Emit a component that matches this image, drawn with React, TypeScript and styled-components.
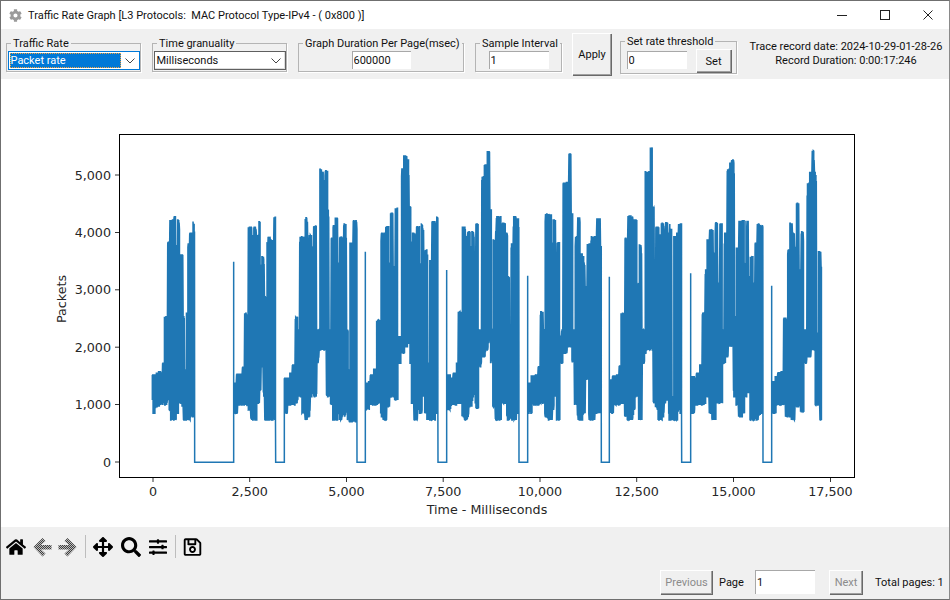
import React from 'react';
import styled, { createGlobalStyle } from 'styled-components';
import { FaHome, FaArrowsAlt, FaSearch, FaSlidersH, FaRegSave, FaCog } from 'react-icons/fa';

const UI = '"Roboto", "Liberation Sans", sans-serif';
const Global = createGlobalStyle`
  html, body { margin: 0; padding: 0; background: #fff; }
  body { font-family: ${UI}; font-size: 11px; color: #000; }
`;

const Window = styled.div`
  width: 950px; height: 600px; box-sizing: border-box; border: 1px solid #6f6f6f;
  border-right-color: #8a8a8a; display: flex; flex-direction: column; overflow: hidden; background: #fff;
`;
const TitleBar = styled.div`
  height: 28px; flex: none; display: flex; align-items: center; padding-left: 8px; background: #fff;
`;
const AppIcon = styled(FaCog)`
  width: 13px; height: 13px; color: #9a9a9a; margin-right: 6px;
`;
const Title = styled.div` flex: 1; font-size: 11px; white-space: pre; color: #111; `;
const WinButton = styled.div`
  width: 43px; height: 28px; display: flex; align-items: center; justify-content: center;
  svg { width: 12px; height: 12px; stroke: #222; stroke-width: 1; fill: none; }
`;
const Toolbar = styled.div`
  height: 50px; flex: none; background: #f0f0f0; display: flex; align-items: center; gap: 11px; padding-left: 5px;
`;
const Group = styled.fieldset<{ $w: number; $h?: number }>`
  width: ${p => p.$w}px; height: ${p => p.$h ?? 36}px; box-sizing: border-box; margin: 0; padding: 0;
  border: 1px solid #b4b4b4; box-shadow: 1px 1px 0 #fff; display: flex; justify-content: center; flex: none; min-width: 0;
`;
const Legend = styled.legend`
  margin-left: 4px; padding: 0 2px; font-size: 11px; line-height: 15px; white-space: nowrap; color: #111;
`;
const GroupInner = styled.div<{ $pad?: string }>`
  display: flex; align-items: flex-start; width: 100%; justify-content: center; padding: ${p => p.$pad ?? '0'};
  box-sizing: border-box;
`;
const Select = styled.div<{ $active?: boolean }>`
  width: 132px; height: 19px; box-sizing: border-box; display: flex; align-items: center; background: #fff;
  border: 1px solid ${p => (p.$active ? '#0078d7' : '#5f5f5f')};
  box-shadow: ${p => (p.$active ? 'none' : 'inset -1px -1px 0 #ddd')};
`;
const SelectValue = styled.div<{ $active?: boolean }>`
  flex: 1; height: 15px; line-height: 14px; padding-left: 0; margin-left: 1px; box-sizing: border-box; font-size: 11px;
  background: ${p => (p.$active ? '#0078d7' : 'transparent')}; color: ${p => (p.$active ? '#fff' : '#111')};
  border: 1px dotted ${p => (p.$active ? '#f2a23c' : 'transparent')};
`;
const Chevron = styled.svg`
  width: 10px; height: 6px; margin: 0 4px 0 4px; flex: none; fill: none; stroke: #444; stroke-width: 1;
`;
const Field = styled.input<{ $w: number; $h?: number }>`
  width: ${p => p.$w}px; height: ${p => p.$h ?? 18}px; box-sizing: border-box; margin: 0; padding: 0 0 0 1px;
  border: none; border-top: 1px solid #a8a8a8; border-left: 1px solid #a8a8a8; outline: none; background: #fff;
  font: 11px ${UI}; color: #111; flex: none;
`;
const Btn = styled.button<{ $w: number; $h: number; $off?: boolean }>`
  width: ${p => p.$w}px; height: ${p => p.$h}px; box-sizing: border-box; flex: none; margin: 0; padding: 0;
  background: #f0f0f0; border: none; border-top: 1px solid #fff; border-left: 1px solid #fff;
  box-shadow: inset -1px -1px 0 #a0a0a0, 1px 1px 0 #696969;
  font: 11px ${UI}; color: ${p => (p.$off ? '#8b8b8b' : '#111')};
`;
const ApplyBtn = styled(Btn)` margin: 0 -2px 0 -1px; `;
const SetBtn = styled(Btn)` margin: -2px 0 0 9px; `;
const Info = styled.div`
  width: 196px; text-align: center; font-size: 11px; line-height: 14px; white-space: nowrap; color: #111;
`;
const Content = styled.div` flex: 1; min-height: 0; background: #fff; `;
const ChartSvg = styled.svg`
  display: block; width: 948px; height: 448px;
  text { font-family: "DejaVu Sans", sans-serif; font-size: 12.7px; fill: #262626; }
`;
const Bottom = styled.div`
  height: 72px; flex: none; background: #f0f0f0; display: flex; flex-direction: column;
`;
const NavBar = styled.div`
  height: 43px; flex: none; display: flex; align-items: flex-start; padding: 10px 0 0 5px; box-sizing: border-box;
`;
const Tool = styled.div<{ $w: number; $gap?: number }>`
  width: ${p => p.$w}px; height: 20px; flex: none; display: flex; align-items: center; justify-content: center;
  margin-right: ${p => p.$gap ?? 8}px; color: #000; svg { width: 100%; height: 100%; }
`;
const Sep = styled.div`
  width: 1px; height: 23px; margin: -2px 7px 0 0; background: #bdbdbd; flex: none;
`;
const Pager = styled.div`
  display: flex; align-items: center; height: 24px; padding-left: 659px; font-size: 11px; color: #111;
`;
const PageLabel = styled.span` width: 24px; flex: none; margin: 0 12px 0 7px; white-space: nowrap; `;
const TotalLabel = styled.span` margin-left: 13px; white-space: nowrap; `;
const NextBtn = styled(Btn)` margin-left: 14px; `;

type C = [number, number, number];
const O5 = 110, O6 = 350, O7 = 600;
const BURSTS: { o: number; start?: number; end: number; spike: number; cols: C[] }[] = [
  { o: O5, end: 254, spike: 395, cols: [[127,735,810],[131,735,850],[135,770,825],[140,730,830],[146,725,825],[152,745,825],[158,700,820],[164,560,825],[170,600,810],[174,335,790],[180,270,840],[184,270,870],[191,258,870],[196,345,850],[203,270,810],[208,460,820],[212,375,710],[218,560,830],[222,720,870],[230,550,870],[234,340,870],[240,310,860],[250,265,850]] },
  { o: O5, start: 371, end: 497, spike: 745, cols: [[371,760,850],[380,733,825],[390,733,825],[398,712,825],[405,550,825],[410,620,820],[416,292,840],[425,315,870],[432,290,870],[438,315,820],[446,275,780],[450,380,710],[458,380,710],[462,500,800],[466,800,870],[472,320,870],[480,330,870],[492,262,870]] },
  { o: O5, start: 523, end: 741, spike: 365, cols: [[523,745,850],[530,745,825],[540,730,825],[548,705,825],[556,560,820],[562,600,800],[570,320,800],[578,320,850],[586,263,870],[592,350,860],[598,315,800],[605,370,700],[612,288,800],[618,600,700],[624,600,660],[630,118,660],[636,125,660],[640,150,660],[646,122,660],[652,240,800],[656,600,700],[664,325,825],[670,285,870],[676,265,870],[682,400,820],[690,322,870],[696,480,710],[702,282,860],[708,600,720],[714,720,870],[720,340,875],[730,272,875],[738,275,860]] },
  { o: O6, start: 46, end: 264, spike: 420, cols: [[48,760,840],[56,755,825],[62,735,825],[72,718,825],[80,570,820],[88,600,800],[94,310,860],[102,315,870],[108,290,830],[116,400,800],[122,250,800],[128,410,700],[136,235,810],[142,620,700],[150,620,670],[155,115,670],[162,78,650],[170,90,640],[176,230,640],[182,600,700],[186,310,820],[194,315,870],[200,290,840],[208,400,850],[214,285,800],[220,440,710],[226,360,850],[232,700,870],[240,390,870],[246,275,870],[254,330,850],[260,262,850]] },
  { o: O6, start: 290, end: 507, spike: 437, cols: [[292,735,840],[300,745,825],[310,730,825],[320,700,820],[326,545,820],[332,600,800],[338,292,860],[346,320,870],[354,305,820],[360,350,830],[366,305,800],[372,440,720],[378,282,835],[384,600,710],[392,600,680],[396,140,680],[404,105,660],[412,65,640],[418,240,640],[424,600,700],[430,330,830],[438,260,870],[445,260,870],[452,400,800],[458,280,820],[465,310,700],[472,440,870],[478,820,870],[484,340,870],[490,260,870],[497,300,850],[503,265,850]] },
  { o: O6, start: 533, end: 754, spike: 440, cols: [[536,760,850],[544,738,825],[556,735,825],[565,710,820],[572,545,820],[578,600,790],[586,252,860],[596,255,870],[604,340,840],[610,270,800],[616,430,700],[622,338,870],[628,620,700],[636,600,670],[640,160,670],[650,155,650],[657,72,650],[662,250,640],[668,600,700],[676,320,825],[684,262,870],[690,370,870],[696,380,850],[704,470,750],[712,342,710],[718,800,870],[724,320,870],[732,320,850],[740,265,850],[750,350,850]] },
  { o: O7, start: 28, end: 245, spike: 430, cols: [[29,750,850],[38,738,825],[50,735,825],[58,708,820],[64,550,820],[70,600,790],[76,325,860],[84,258,870],[92,262,870],[98,345,840],[103,270,800],[110,460,700],[118,345,870],[124,600,700],[132,600,670],[136,125,660],[144,125,660],[151,55,660],[156,230,660],[162,550,820],[168,292,840],[176,315,870],[184,280,860],[190,400,820],[195,278,810],[202,460,710],[208,282,870],[214,800,870],[222,320,870],[230,310,850],[236,282,850]] },
  { o: O7, start: 272, end: 489, spike: 467, cols: [[274,740,850],[282,745,825],[290,730,825],[300,705,825],[308,550,820],[316,420,800],[322,330,800],[330,300,850],[338,370,870],[346,278,820],[352,460,720],[360,282,820],[366,600,700],[374,310,680],[382,118,650],[390,100,650],[396,90,650],[402,560,800],[410,355,825],[418,272,860],[426,272,850],[432,400,800],[438,272,790],[444,440,710],[452,380,870],[458,460,870],[466,340,870],[472,282,855],[480,285,850]] },
  { o: O7, start: 515, end: 665, spike: 0, cols: [[518,755,850],[526,740,825],[534,728,825],[544,725,825],[552,565,820],[558,620,860],[564,360,860],[570,280,860],[576,310,870],[582,350,830],[590,220,830],[596,420,720],[604,305,845],[610,600,700],[618,600,680],[622,160,680],[630,125,660],[637,62,660],[642,125,660],[648,610,825],[656,365,820],[662,410,870]] },
];

const sy = (z: number) => 130 + z / 3;
const ZERO = 462.3;
let seed = 12345;
const rnd = () => {
  seed = (seed * 1664525 + 1013904223) % 4294967296;
  return seed / 4294967296;
};

function burstPath(o: number, cols: C[], end: number): string {
  const at = (z: number): C => {
    let c = cols[0];
    for (const k of cols) if (k[0] <= z) c = k;
    return c;
  };
  let d = '';
  let flip = false;
  for (let z = cols[0][0]; z <= end; z += 1.1) {
    const b = at(z);
    const wide = [at(z - 2.5), b, at(z + 2.5)];
    const topBase = Math.min(b[1], at(z - 1)[1], at(z + 1)[1]);
    const botBase = Math.max(...wide.map((c) => c[2]));
    // the trace is a rapid oscillation: many samples stop short of the envelope
    const r1 = rnd();
    const r2 = rnd();
    const topZ = topBase + (r1 < 0.6 ? 0 : (r1 - 0.6) * Math.min(120, Math.max(0, 640 - topBase) * 0.3));
    const botZ = botBase - (r2 < 0.55 ? 0 : (r2 - 0.55) * 45);
    const x = (o + z / 3).toFixed(2);
    const top = sy(topZ).toFixed(1);
    const bot = sy(botZ).toFixed(1);
    d += flip ? `L${x} ${bot}L${x} ${top}` : `L${x} ${top}L${x} ${bot}`;
    flip = !flip;
  }
  return d;
}

function buildPath(): string {
  let d = 'M152.5 400';
  let spike = 0;
  BURSTS.forEach((s) => {
    if (s.start !== undefined) {
      const x = (s.o + s.start / 3).toFixed(2);
      d += `L${x} ${ZERO}L${x} ${sy(spike).toFixed(1)}L${x} 395`;
    }
    d += burstPath(s.o, s.cols, s.end);
    if (s.spike) d += `L${(s.o + s.end / 3).toFixed(2)} ${ZERO}`;
    spike = s.spike;
  });
  return d;
}

const LINE = buildPath();
const XT: [number, string][] = [[153,'0'],[249.7,'2,500'],[346.5,'5,000'],[443.2,'7,500'],[540,'10,000'],[636.7,'12,500'],[733.5,'15,000'],[830.5,'17,500']];
const YT: [number, string][] = [[462,'0'],[404.5,'1,000'],[347.2,'2,000'],[289.8,'3,000'],[232.5,'4,000'],[175,'5,000']];

function Chart() {
  return (
    <ChartSvg viewBox="1 79 948 448">
      <path d={LINE} fill="none" stroke="#1f77b4" strokeWidth={1.5} strokeLinejoin="miter" />
      <rect x={119.5} y={134.5} width={735} height={343} fill="none" stroke="#000" strokeWidth={1} />
      {XT.map(([x, l]) => (
        <g key={l}>
          <line x1={x} x2={x} y1={478} y2={482} stroke="#000" strokeWidth={0.8} />
          <text x={x} y={496} textAnchor="middle">{l}</text>
        </g>
      ))}
      {YT.map(([y, l]) => (
        <g key={l}>
          <line x1={115} x2={119} y1={y} y2={y} stroke="#000" strokeWidth={0.8} />
          <text x={111} y={y + 4.6} textAnchor="end">{l}</text>
        </g>
      ))}
      <text x={487} y={514} textAnchor="middle">Time - Milliseconds</text>
      <text transform="translate(66 299) rotate(-90)" textAnchor="middle">Packets</text>
    </ChartSvg>
  );
}

const Down = () => (
  <Chevron viewBox="0 0 10 6"><path d="M0.5 0.5 L5 5 L9.5 0.5" /></Chevron>
);

const Dither = ({ id }: { id: string }) => (
  <defs>
    <pattern id={id} patternUnits="userSpaceOnUse" width="2" height="2">
      <rect width="2" height="2" fill="#bcbcbc" />
      <rect width="1" height="1" fill="#3e3e3e" />
      <rect x="1" y="1" width="1" height="1" fill="#3e3e3e" />
    </pattern>
  </defs>
);

const BackIcon = () => (
  <svg viewBox="0 0 19 20">
    <Dither id="d-back" />
    <path fill="url(#d-back)" d="M0.5 10 L9.5 1 L12.5 4 L8 8 H18.5 V12.5 H8 L12.5 16.5 L9.5 19.5 Z" />
  </svg>
);
const ForwardIcon = () => (
  <svg viewBox="0 0 19 20">
    <Dither id="d-forward" />
    <path fill="url(#d-forward)" d="M18.5 10 L9.5 1 L6.5 4 L11 8 H0.5 V12.5 H11 L6.5 16.5 L9.5 19.5 Z" />
  </svg>
);

export default function App() {
  return (
    <Window>
      <Global />
      <TitleBar>
        <AppIcon />
        <Title>{'Traffic Rate Graph [L3 Protocols:  MAC Protocol Type-IPv4 - ( 0x800 )]'}</Title>
        <WinButton><svg viewBox="0 0 12 12"><path d="M1 6.5 H11" /></svg></WinButton>
        <WinButton><svg viewBox="0 0 12 12"><rect x="1.5" y="1.5" width="9" height="9" /></svg></WinButton>
        <WinButton><svg viewBox="0 0 12 12"><path d="M1.5 1.5 L10.5 10.5 M10.5 1.5 L1.5 10.5" /></svg></WinButton>
      </TitleBar>
      <Toolbar>
        <Group $w={135}>
          <Legend>Traffic Rate</Legend>
          <GroupInner>
            <Select $active><SelectValue $active>Packet rate</SelectValue><Down /></Select>
          </GroupInner>
        </Group>
        <Group $w={135}>
          <Legend>Time granuality</Legend>
          <GroupInner>
            <Select><SelectValue>Milliseconds</SelectValue><Down /></Select>
          </GroupInner>
        </Group>
        <Group $w={166}>
          <Legend>Graph Duration Per Page(msec)</Legend>
          <GroupInner><Field $w={59} readOnly value="600000" /></GroupInner>
        </Group>
        <Group $w={87}>
          <Legend>Sample Interval</Legend>
          <GroupInner><Field $w={60} readOnly value="1" /></GroupInner>
        </Group>
        <ApplyBtn $w={39} $h={42}>Apply</ApplyBtn>
        <Group $w={117} $h={40}>
          <Legend>Set rate threshold</Legend>
          <GroupInner $pad="2px 0 0 0">
            <Field $w={60} readOnly value="0" />
            <SetBtn $w={35} $h={23}>Set</SetBtn>
          </GroupInner>
        </Group>
        <Info>
          Trace record date: 2024-10-29-01-28-26<br />
          Record Duration: 0:00:17:246
        </Info>
      </Toolbar>
      <Content><Chart /></Content>
      <Bottom>
        <NavBar>
          <Tool $w={20} $gap={7}><FaHome /></Tool>
          <Tool $w={19} $gap={6}><BackIcon /></Tool>
          <Tool $w={19}><ForwardIcon /></Tool>
          <Sep />
          <Tool $w={20}><FaArrowsAlt /></Tool>
          <Tool $w={20}><FaSearch /></Tool>
          <Tool $w={18}><FaSlidersH /></Tool>
          <Sep />
          <Tool $w={19}><FaRegSave /></Tool>
        </NavBar>
        <Pager>
          <Btn $w={52} $h={24} $off>Previous</Btn>
          <PageLabel>Page</PageLabel>
          <Field $w={60} $h={24} readOnly value="1" />
          <NextBtn $w={33} $h={24} $off>Next</NextBtn>
          <TotalLabel>Total pages: 1</TotalLabel>
        </Pager>
      </Bottom>
    </Window>
  );
}
